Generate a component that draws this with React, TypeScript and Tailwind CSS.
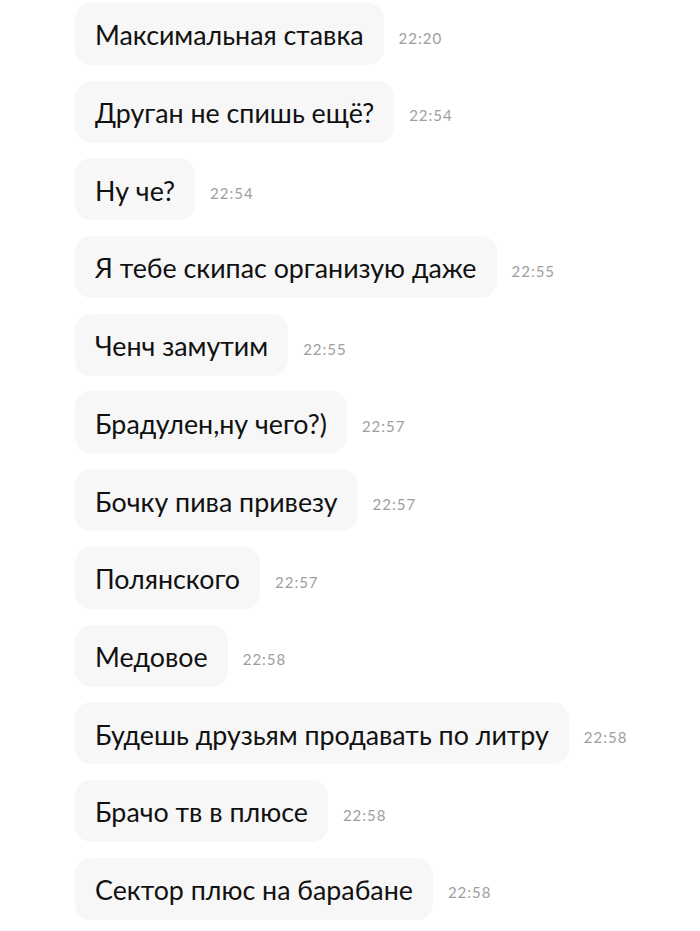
import React from "react";

const messages = [
  { text: "Максимальная ставка", time: "22:20" },
  { text: "Друган не спишь ещё?", time: "22:54" },
  { text: "Ну че?", time: "22:54" },
  { text: "Я тебе скипас организую даже", time: "22:55" },
  { text: "Ченч замутим", time: "22:55" },
  { text: "Брадулен,ну чего?)", time: "22:57" },
  { text: "Бочку пива привезу", time: "22:57" },
  { text: "Полянского", time: "22:57" },
  { text: "Медовое", time: "22:58" },
  { text: "Будешь друзьям продавать по литру", time: "22:58" },
  { text: "Брачо тв в плюсе", time: "22:58" },
  { text: "Сектор плюс на барабане", time: "22:58" },
];

export default function App() {
  return (
    <div className="w-[700px] h-[931px] bg-white overflow-hidden font-['Lato',sans-serif]">
      {/* message list */}
      <ul className="flex flex-col gap-[15.7px] pt-[3px] pl-[75px]">
        {messages.map((m, i) => (
          <li key={i} className="flex items-center">
            <div className="h-[62px] flex items-center px-5 pt-[3px] rounded-2xl bg-[#f7f7f7] text-[26.8px] text-[#111]">
              {m.text}
            </div>
            <span className="ml-[15px] pt-[8px] text-[15px] tracking-[1px] text-[#9e9e9e]">
              {m.time}
            </span>
          </li>
        ))}
      </ul>
    </div>
  );
}
